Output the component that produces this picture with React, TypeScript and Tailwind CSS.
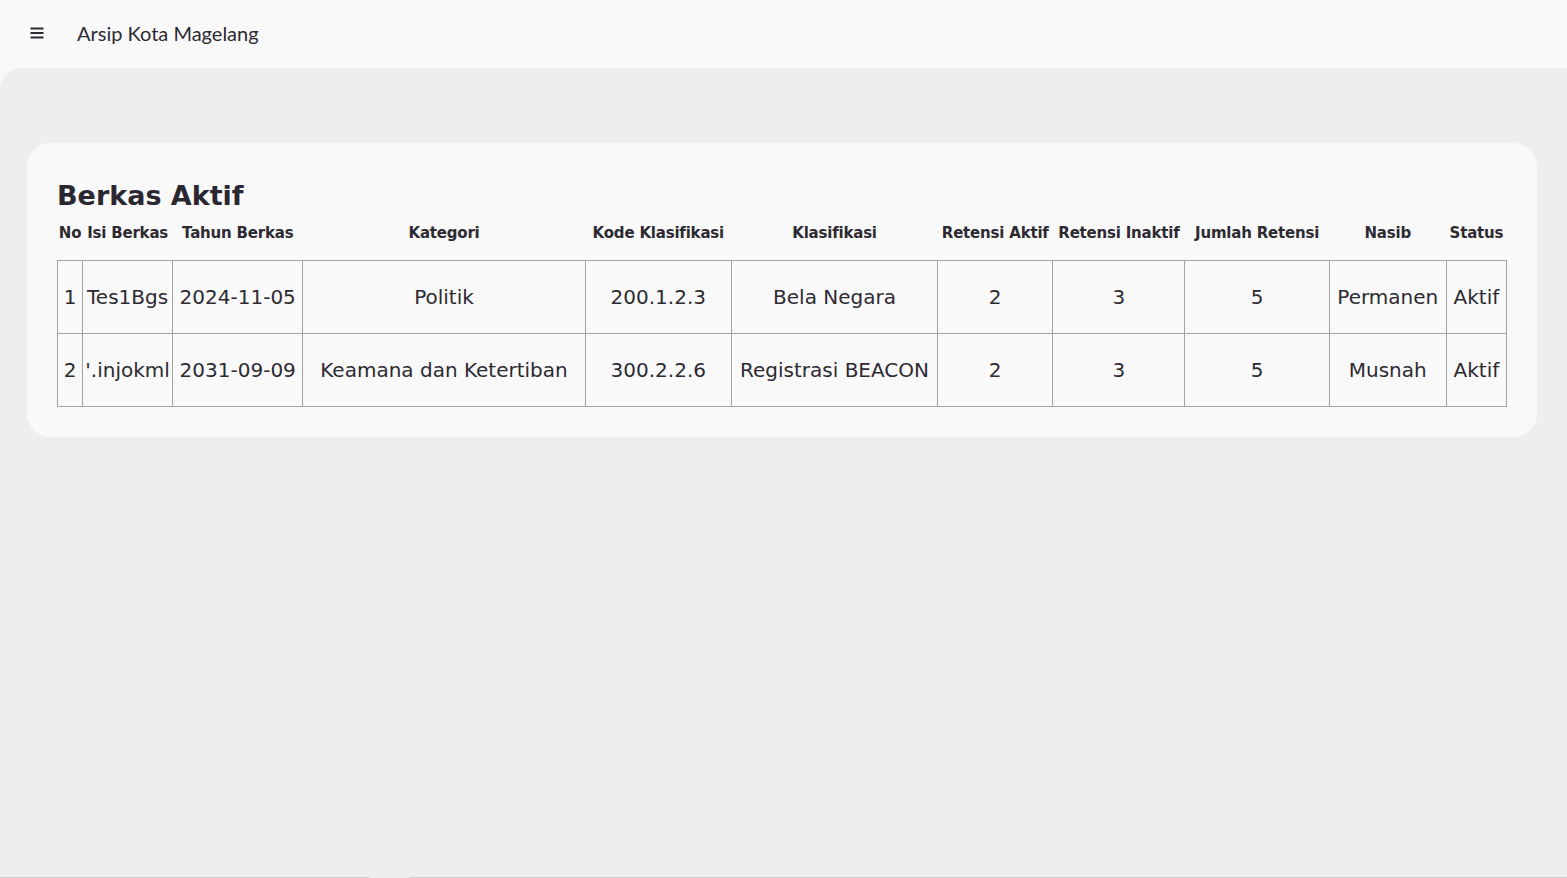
import React from 'react'

const columns = [
  { label: 'No', width: 'w-[25px]' },
  { label: 'Isi Berkas', width: 'w-[90px]' },
  { label: 'Tahun Berkas', width: 'w-[130px]' },
  { label: 'Kategori', width: 'w-[282px]' },
  { label: 'Kode Klasifikasi', width: 'w-[146px]' },
  { label: 'Klasifikasi', width: 'w-[206px]' },
  { label: 'Retensi Aktif', width: 'w-[115px]' },
  { label: 'Retensi Inaktif', width: 'w-[132px]' },
  { label: 'Jumlah Retensi', width: 'w-[144px]' },
  { label: 'Nasib', width: 'w-[117px]' },
  { label: 'Status', width: 'w-[60px]' },
]

const rows = [
  ['1', 'Tes1Bgs', '2024-11-05', 'Politik', '200.1.2.3', 'Bela Negara', '2', '3', '5', 'Permanen', 'Aktif'],
  ['2', "'.injokml", '2031-09-09', 'Keamana dan Ketertiban', '300.2.2.6', 'Registrasi BEACON', '2', '3', '5', 'Musnah', 'Aktif'],
]

function MenuIcon() {
  return (
    <svg width="16" height="16" viewBox="0 0 16 16" className="text-[#2d2a32]">
      <path d="M1.5 3.5h13M1.5 8h13M1.5 12.5h13" stroke="currentColor" strokeWidth="1.8" />
    </svg>
  )
}

export default function App() {
  return (
    <div className="flex h-[878px] flex-col bg-[#f9f9f9] text-[#2d2a32]">
      <header className="flex h-[68px] shrink-0 items-center pb-[2px] pl-[29px]">
        <MenuIcon />
        <span className="ml-[32px] font-['Lato',sans-serif] text-[20px]">Arsip Kota Magelang</span>
      </header>

      <main className="flex-1 rounded-tl-[22px] bg-[#eeeeee] pl-[27px] pr-[30px] pt-[75px]">
        <div className="rounded-[24px] bg-[#f9f9f9] px-[30px] pb-[30px] pt-[35px] font-['DejaVu_Sans',sans-serif]">
          <h1 className="text-[27px] font-bold leading-[36px] text-[#2b2730]">Berkas Aktif</h1>
          <table className="w-full table-fixed border-collapse">
            <colgroup>
              {columns.map((c) => (
                <col key={c.label} className={c.width} />
              ))}
            </colgroup>
            <thead>
              <tr className="h-[46px]">
                {columns.map((c) => (
                  <th
                    key={c.label}
                    className="whitespace-nowrap pb-[8px] text-center text-[15px] font-bold tracking-[-0.2px]"
                  >
                    {c.label}
                  </th>
                ))}
              </tr>
            </thead>
            <tbody>
              {rows.map((row, i) => (
                <tr key={i} className="h-[73px]">
                  {row.map((cell, j) => (
                    <td
                      key={j}
                      className="whitespace-nowrap border border-[#a3a3a3] text-center align-middle text-[20px] font-normal"
                    >
                      {cell}
                    </td>
                  ))}
                </tr>
              ))}
            </tbody>
          </table>
        </div>
      </main>

      <div className="flex h-px shrink-0 bg-[#eeeeee]">
        <div className="w-[369px] bg-[#cfcfcf]" />
        <div className="w-[40px]" />
        <div className="flex-1 bg-[#cfcfcf]" />
      </div>
    </div>
  )
}
